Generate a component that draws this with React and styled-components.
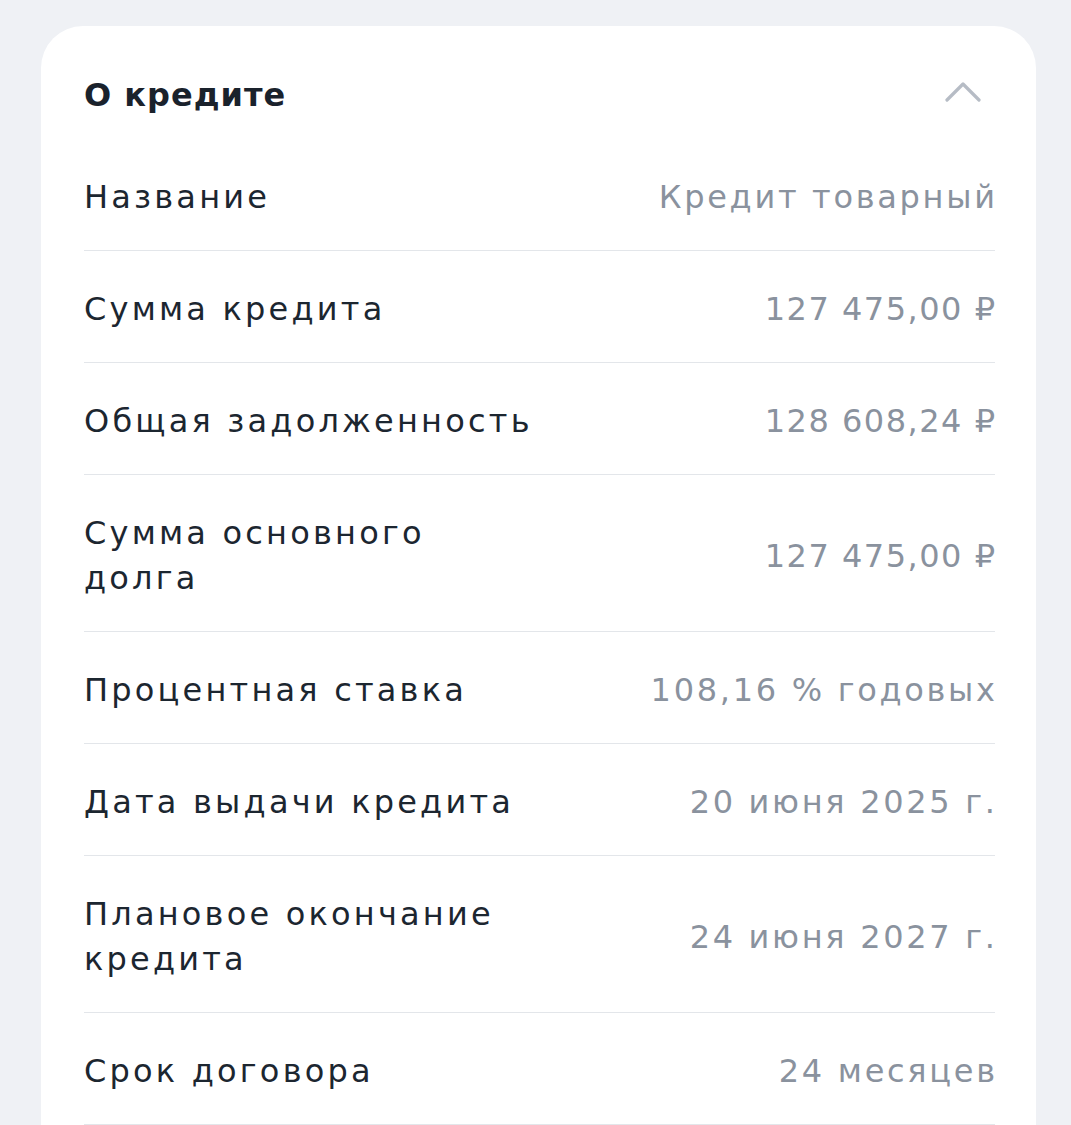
import React from "react";
import styled, { createGlobalStyle } from "styled-components";

const Global = createGlobalStyle`
  body {
    margin: 0;
    background: #eff1f5;
    font-family: "DejaVu Sans", Inter, "Noto Sans", sans-serif;
  }
`;

const Page = styled.div`
  padding: 26px 35px 0 41px;
  height: 1125px;
  overflow: hidden;
  box-sizing: border-box;
`;

const Card = styled.section`
  width: 995px;
  background: #fff;
  border-radius: 42px;
  padding: 46px 41px 120px 43px;
  box-sizing: border-box;
`;

const Header = styled.header`
  display: flex;
  align-items: center;
  justify-content: space-between;
  height: 45px;
  margin-bottom: 22px;
`;

const Title = styled.h2`
  margin: 0;
  font-size: 32px;
  font-weight: 700;
  letter-spacing: 1px;
  color: #1a222c;
`;

const Chevron = styled.svg`
  width: 36px;
  height: 22px;
  margin-right: 14px;
  margin-top: -6px;
`;

const Row = styled.div`
  display: flex;
  align-items: center;
  justify-content: space-between;
  gap: 24px;
  padding: 36px 0 30px;
  border-bottom: 1px solid #e3e6ea;
`;

const Label = styled.div`
  max-width: 452px;
  font-size: 32px;
  line-height: 45px;
  letter-spacing: 3.2px;
  color: #1c2630;
`;

const Value = styled.div`
  font-size: 32px;
  line-height: 45px;
  letter-spacing: ${(p) => (p.$digits ? "1.5px" : "2.7px")};
  color: #8a929e;
  text-align: right;
  white-space: nowrap;
  margin-right: -${(p) => (p.$digits ? "1.5px" : "2.7px")};
`;

const rows = [
  ["Название", "Кредит товарный"],
  ["Сумма кредита", "127 475,00 ₽", true],
  ["Общая задолженность", "128 608,24 ₽", true],
  ["Сумма основного долга", "127 475,00 ₽", true],
  ["Процентная ставка", "108,16 % годовых"],
  ["Дата выдачи кредита", "20 июня 2025 г."],
  ["Плановое окончание кредита", "24 июня 2027 г."],
  ["Срок договора", "24 месяцев"],
];

export default function App() {
  return (
    <>
      <Global />
      <Page>
        <Card>
          <Header>
            <Title>О кредите</Title>
            <Chevron viewBox="0 0 36 22" fill="none">
              <polyline
                points="2,19 18,3 34,19"
                stroke="#b6bcc5"
                strokeWidth="3.2"
                strokeLinecap="round"
                strokeLinejoin="round"
              />
            </Chevron>
          </Header>
          {rows.map(([label, value, digits]) => (
            <Row key={label}>
              <Label>{label}</Label>
              <Value $digits={digits}>{value}</Value>
            </Row>
          ))}
        </Card>
      </Page>
    </>
  );
}
